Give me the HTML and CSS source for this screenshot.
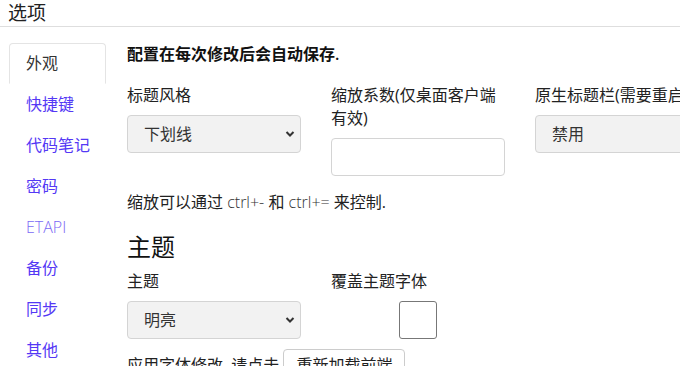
FILE: index.html
```html
<!DOCTYPE html>
<html lang="zh">
<head>
<meta charset="utf-8">
<title>选项</title>
<link rel="stylesheet" href="styles.css">
</head>
<body>
<div class="header">选项</div>
<div class="main">
  <nav class="nav">
    <div class="tab active">外观</div>
    <a class="tab">快捷键</a>
    <a class="tab">代码笔记</a>
    <a class="tab">密码</a>
    <a class="tab latin">ETAPI</a>
    <a class="tab">备份</a>
    <a class="tab">同步</a>
    <a class="tab">其他</a>
  </nav>
  <div class="content">
    <p class="note">配置在每次修改后会自动保存.</p>
    <div class="row">
      <div class="col">
        <label class="lbl">标题风格</label>
        <div class="select-wrap">
          <select class="select"><option>下划线</option></select>
          <svg class="chev" width="10" height="8" viewBox="0 0 10 8"><path d="M1.5 2 L5 5.5 L8.5 2" fill="none" stroke="#333" stroke-width="2"/></svg>
        </div>
      </div>
      <div class="col">
        <label class="lbl">缩放系数(仅桌面客户端有效)</label>
        <input class="input" type="text">
      </div>
      <div class="col wide">
        <label class="lbl">原生标题栏(需要重启应用)</label>
        <div class="select-wrap">
          <select class="select"><option>禁用</option></select>
        </div>
      </div>
    </div>
    <p class="hint">缩放可以通过 <span class="latin">ctrl+-</span> 和 <span class="latin">ctrl+=</span> 来控制.</p>
    <h2 class="h">主题</h2>
    <div class="row">
      <div class="col">
        <label class="lbl">主题</label>
        <div class="select-wrap">
          <select class="select"><option>明亮</option></select>
          <svg class="chev" width="10" height="8" viewBox="0 0 10 8"><path d="M1.5 2 L5 5.5 L8.5 2" fill="none" stroke="#333" stroke-width="2"/></svg>
        </div>
      </div>
      <div class="col">
        <label class="lbl">覆盖主题字体</label>
        <div class="check-row"><span class="check"></span></div>
      </div>
    </div>
    <p class="reload">应用字体修改, 请点击 <button class="btn">重新加载前端</button></p>
  </div>
</div>
</body>
</html>
```

FILE: styles.css
```css
html, body {
  margin: 0;
  padding: 0;
  width: 680px;
  height: 366px;
  overflow: hidden;
  background: #fff;
}
body {
  font-family: "Open Sans", "Noto Sans CJK SC", sans-serif;
  font-size: 16px;
  color: #222;
}
.header {
  font-size: 19px;
  line-height: 26px;
  height: 26px;
  padding-left: 8px;
  border-bottom: 1px solid #dedede;
  color: #222;
}
.main {
  display: flex;
  padding-top: 16px;
  padding-left: 9px;
}
.nav {
  width: 97px;
  flex-shrink: 0;
  display: flex;
  flex-direction: column;
}
.tab {
  display: block;
  padding: 7px 16px;
  height: 25px;
  line-height: 25px;
  white-space: nowrap;
  color: #5438f5;
  border: 1px solid transparent;
}
.tab.latin { color: #7a68f5; font-weight: 300; }
.tab.active {
  color: #333;
  border-color: #e4e4e4;
  border-bottom-color: #fff;
  border-radius: 4px 4px 0 0;
}
.content {
  margin-left: 21px;
  flex-shrink: 0;
  width: 600px;
}
.note {
  margin: 1px 0 0;
  line-height: 20px;
  font-weight: 600;
  color: #111;
}
.row {
  display: flex;
  gap: 30px;
  flex-wrap: nowrap;
  margin-top: 20px;
}
.col {
  width: 174px;
  flex-shrink: 0;
  display: flex;
  flex-direction: column;
}
.col.wide { width: 300px; }
.lbl {
  line-height: 23px;
  margin-bottom: 8px;
  color: #222;
}
.select-wrap {
  position: relative;
  height: 38px;
}
.select {
  appearance: none;
  -webkit-appearance: none;
  width: 100%;
  height: 38px;
  box-sizing: border-box;
  border: 1px solid #d4d4d4;
  border-radius: 4px;
  background: #f2f2f2;
  font-family: inherit;
  font-size: 16px;
  color: #333;
  padding: 0 16px;
  margin: 0;
}
.chev {
  position: absolute;
  right: 6px;
  top: 15px;
  pointer-events: none;
}
.input {
  height: 38px;
  box-sizing: border-box;
  width: 174px;
  border: 1px solid #d4d4d4;
  border-radius: 4px;
  background: #fff;
  margin: 0;
}
.hint {
  margin: 15px 0 0;
  line-height: 22px;
  color: #222;
}
.latin { font-weight: 300; color: #333; }
.h {
  margin: 20px 0 0;
  font-size: 24px;
  font-weight: 400;
  line-height: 28px;
  color: #111;
}
.h + .row { margin-top: 9px; }
.check-row {
  height: 38px;
  display: flex;
  padding-left: 68px;
}
.check {
  width: 38px;
  height: 38px;
  box-sizing: border-box;
  border: 1px solid #777;
  border-radius: 3px;
  background: #fff;
}
.reload {
  margin: 10px 0 0;
  line-height: 24px;
  color: #222;
}
.btn {
  font-family: inherit;
  font-size: 16px;
  background: #fff;
  border: 1px solid #ccc;
  border-radius: 4px;
  padding: 2px 12px;
  color: #222;
}
```
